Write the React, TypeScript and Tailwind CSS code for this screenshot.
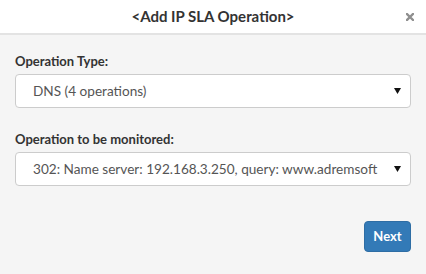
import React from "react";

function Select({ text }: { text: string }) {
  return (
    <div className="flex h-[34px] items-center justify-between rounded-[4px] border border-[#cccccc] bg-white pl-[17px] pr-[9px]">
      <span className="whitespace-nowrap text-[13.6px] text-[#555555]">{text}</span>
      <svg width="7" height="6" viewBox="0 0 7 6">
        <path d="M0 0 H7 L3.5 6 Z" fill="#111" />
      </svg>
    </div>
  );
}

export default function App() {
  return (
    <div
      className="flex h-[274px] w-[426px] flex-col bg-[#f5f5f5]"
      style={{ fontFamily: 'Lato, "Open Sans", sans-serif' }}
    >
      <div className="relative flex h-[35px] items-center justify-center border-b-2 border-[#e3e3e3] bg-white">
        <span className="text-[15px] font-bold text-[#333333]">&lt;Add IP SLA Operation&gt;</span>
        <svg width="8" height="8" viewBox="0 0 8 8" className="absolute right-[12px] top-[13px]">
          <path d="M1 1 L7 7 M7 1 L1 7" stroke="#8f8f8f" strokeWidth="2.4" strokeLinecap="square" />
        </svg>
      </div>
      <div className="flex flex-col px-[15px] pt-[17px]">
        <label className="mb-[4px] block text-[13px] font-bold leading-[18px] text-[#333333]">Operation Type:</label>
        <Select text="DNS (4 operations)" />
        <label className="mb-[4px] mt-[22px] block text-[13px] font-bold leading-[18px] text-[#333333]">
          Operation to be monitored:
        </label>
        <Select text="302: Name server: 192.168.3.250, query: www.adremsoft" />
        <div className="mt-[35px] flex justify-end">
          <button className="h-[31px] w-[47px] rounded-[4px] border border-[#2e6da4] bg-[#337ab7] text-[13px] font-bold text-white">
            Next
          </button>
        </div>
      </div>
    </div>
  );
}
